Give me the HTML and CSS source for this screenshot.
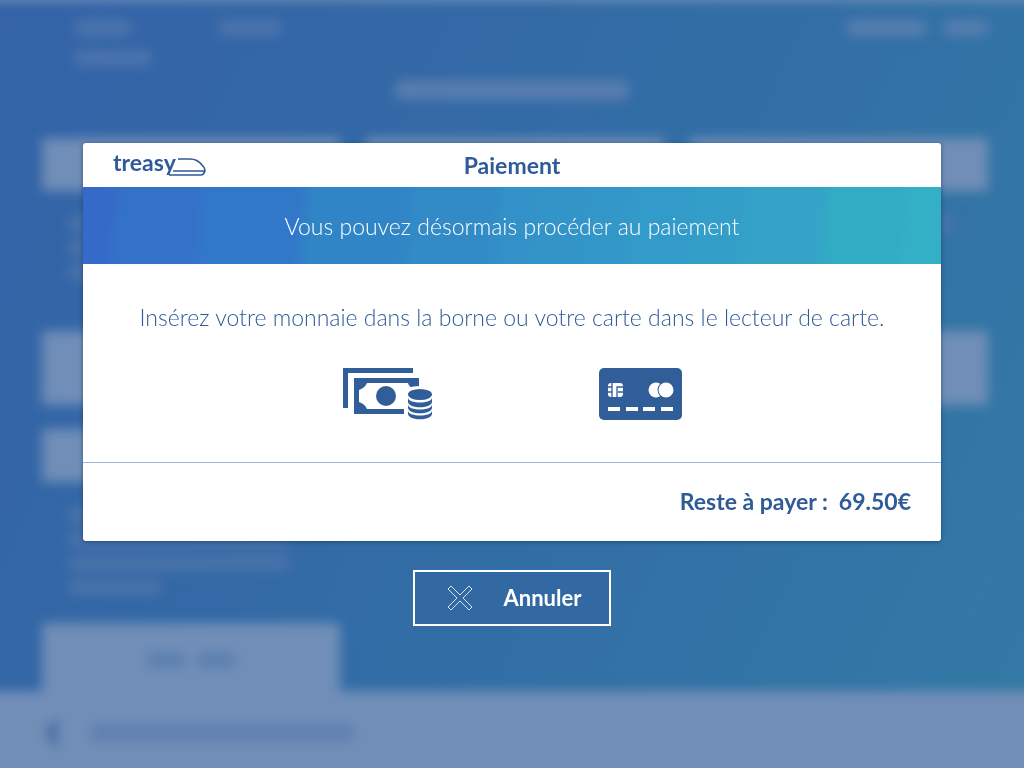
FILE: index.html
```html
<!DOCTYPE html>
<html lang="fr">
<head>
<meta charset="utf-8">
<meta name="viewport" content="width=device-width, initial-scale=1">
<title>Treasy - Paiement</title>
<link rel="stylesheet" href="styles.css">
</head>
<body>
<div class="kiosk" aria-hidden="true">
  <div class="scene">
    <div class="topbar">
      <div class="trip">
        <span class="trip-item"></span>
        <span class="trip-item trip-item-wide"></span>
      </div>
      <div class="travel"></div>
      <div class="clock"><span class="clock-date"></span><span class="clock-time"></span></div>
    </div>
    <div class="heading"></div>
    <div class="tickets">
      <div class="tile tile-name"></div>
      <div class="tile tile-name"></div>
      <div class="tile tile-name"></div>
      <div class="note"><i></i><i></i><i></i></div>
      <div class="note"><i></i><i></i></div>
      <div class="note"><i class="full"></i></div>
      <div class="tile tile-price"></div>
      <div class="tile tile-price"></div>
      <div class="tile tile-price"></div>
    </div>
    <div class="tickets tickets-last">
      <div class="column">
        <div class="tile tile-name"></div>
        <div class="note note-long"><i></i><i></i><i></i><i class="half"></i></div>
        <div class="tile tile-cost"><b></b><b></b></div>
      </div>
    </div>
    <div class="bottombar">
      <svg width="18" height="28" viewBox="0 0 18 28"><path d="M14 3L5 14L14 25" fill="none" stroke="#43699f" stroke-width="7"/></svg>
      <span class="back"></span>
    </div>
  </div>
</div>

<main class="overlay">
  <section class="dialog" role="dialog" aria-modal="true" aria-labelledby="dialog-title">
    <header class="dialog-header">
      <div class="logo">
        <span class="logo-text">treasy</span>
        <svg class="logo-train" width="40" height="20" viewBox="0 0 40 20" aria-hidden="true">
          <path d="M11 3H23C29 3 32 5 35 9C39 13 38 15 37 17Q36 19 34 19H2M6 15H37" fill="none" stroke="#2f5b98" stroke-width="1.700"/>
        </svg>
      </div>
      <h1 class="dialog-title" id="dialog-title">Paiement</h1>
    </header>
    <p class="banner">Vous pouvez désormais procéder au paiement</p>
    <div class="dialog-body">
      <p class="instructions">Insérez votre monnaie dans la borne ou votre carte dans le lecteur de carte.</p>
      <div class="methods">
        <svg width="92" height="54" viewBox="0 0 92 54" role="img" aria-label="Espèces">
          <path d="M1 0H71V5H6V40H1ZM12 10H77V46H12Z" fill="#315d98"/>
          <path d="M25 15H66Q67 19 72 21V41H25Q23 36 17 34V22Q23 20 25 15Z" fill="#fff"/>
          <path d="M62 41V46H12V41Z" fill="#315d98"/>
          <path d="M62 46V29C62 21 68 18 78 18V54H62Z" fill="#fff"/>
          <g fill="#315d98">
            <circle cx="44" cy="28" r="10"/>
            <ellipse cx="78" cy="26.500" rx="12" ry="5.500"/>
            <path d="M66 30C67 36 89 36 90 30V34C89 41 67 41 66 34Z"/>
            <path d="M66 37C67 43 89 43 90 37V40C89 47 67 47 66 40Z"/>
            <path d="M66 43C67 49 89 49 90 43V46C89 53 67 53 66 46Z"/>
          </g>
        </svg>
        <svg width="84" height="52" viewBox="0 0 84 52" role="img" aria-label="Carte bancaire">
          <rect x="1" width="83" height="52" rx="5" fill="#315d98"/>
          <rect x="10" y="15" width="15" height="14" rx="3" fill="#fff"/>
          <path d="M14 15V29M19 29V19H25M10 19H14M10 24H14M20 24H25" fill="none" stroke="#315d98" stroke-width="1.300"/>
          <circle cx="58" cy="22" r="7.500" fill="#fff"/>
          <circle cx="68" cy="22" r="8.500" fill="#315d98"/>
          <circle cx="68" cy="22" r="7.500" fill="#fff"/>
          <path d="M10 41H22M28 41H40M45 41H57M63 41H75" stroke="#fff" stroke-width="4"/>
        </svg>
      </div>
    </div>
    <footer class="dialog-footer">
      <span>Reste à payer :</span>
      <span>69.50€</span>
    </footer>
  </section>
  <button class="cancel" type="button">
    <svg width="26" height="26" viewBox="0 0 26 26" aria-hidden="true">
      <path d="M4 1L13 10L22 1L25 4L16 13L25 22L22 25L13 16L4 25L1 22L10 13L1 4Z" fill="none" stroke="#d6e2f0" stroke-width="1" stroke-linejoin="round"/>
    </svg>
    <span>Annuler</span>
  </button>
</main>
</body>
</html>
```

FILE: styles.css
```css
* {
  box-sizing: border-box;
}

body {
  margin: 0;
  font-family: Lato, "Open Sans", sans-serif;
  color: #2f5b98;
}

/* Ticket screen, out of focus behind the dialog */
.kiosk {
  position: fixed;
  inset: 0;
  overflow: hidden;
  background: linear-gradient(115deg, #3463a8 0%, #3368a6 30%, #326fa6 60%, #3377a6 88%, #347aa5 100%);
}

.scene {
  display: flex;
  flex-direction: column;
  height: calc(100% + 40px);
  margin: -20px;
  width: calc(100% + 40px);
  padding-top: 20px;
  border-top: 4px solid transparent;
  filter: blur(6px);
  box-shadow: inset 0 17px #6f8eb6;
}

.topbar {
  display: flex;
  align-items: flex-start;
  height: 62px;
  padding: 16px 56px 0 94px;
}

.trip {
  display: flex;
  flex-direction: column;
  gap: 14px;
  width: 144px;
}

.trip-item,
.travel,
.clock-date,
.clock-time {
  height: 16px;
  border-radius: 6px;
  background: #4c74ad;
}

.trip-item {
  width: 58px;
}

.trip-item-wide {
  width: 78px;
}

.travel {
  width: 64px;
}

.clock {
  display: flex;
  gap: 18px;
  margin-left: auto;
}

.clock-date {
  width: 80px;
  background: #587eb0;
}

.clock-time {
  width: 44px;
  background: #587eb0;
}

.heading {
  width: 234px;
  height: 20px;
  margin: 14px auto 38px;
  border-radius: 6px;
  background: #587db0;
}

.tickets {
  display: grid;
  grid-template-columns: repeat(3, 1fr);
  column-gap: 26px;
  padding: 0 56px 0 62px;
}

.tickets-last {
  margin-top: 24px;
}

.tile {
  border-radius: 3px;
  background: #708eb7;
}

.tile-name {
  height: 53px;
}

.tile-price {
  height: 74px;
}

.note {
  display: flex;
  flex-direction: column;
  gap: 8px;
  height: 140px;
  padding: 25px 32px 0 26px;
}

.note i {
  width: 94%;
  height: 16px;
  border-radius: 6px;
  background: #4972aa;
}

.note .full {
  width: 100%;
}

.note .half {
  width: 40%;
}

.note-long {
  height: 141px;
  padding-right: 36px;
}

.tile-cost {
  display: flex;
  justify-content: center;
  align-items: center;
  gap: 12px;
  height: 74px;
}

.tile-cost b {
  width: 38px;
  height: 16px;
  border-radius: 6px;
  background: #5d80b0;
}

.bottombar {
  display: flex;
  align-items: center;
  gap: 28px;
  flex: 1;
  margin-top: -6px;
  padding: 0 64px 14px;
  background: #718eb7;
}

.back {
  width: 264px;
  height: 18px;
  border-radius: 6px;
  background: #6080b0;
}

/* Payment dialog */
.overlay {
  position: relative;
  display: flex;
  flex-direction: column;
  justify-content: center;
  align-items: center;
  gap: 29px;
  min-height: 100vh;
  padding: 0 83px;
}

.dialog {
  width: 100%;
  border-radius: 3px;
  background: #fff;
  box-shadow: 0 1px 4px rgba(20, 50, 90, 0.6);
}

.dialog-header {
  display: grid;
  grid-template-columns: 1fr auto 1fr;
  align-items: center;
  height: 44px;
  padding: 0 30px;
}

.logo {
  display: flex;
  align-items: flex-end;
  padding-bottom: 5px;
}

.logo-text {
  font-size: 23px;
  line-height: 28px;
  font-weight: 700;
}

.logo-train {
  margin-left: -9px;
}

.dialog-title {
  margin: 0;
  font-size: 23px;
  line-height: 28px;
  font-weight: 700;
}

.banner {
  margin: 0;
  padding: 23px 24px 22px;
  font-size: 23px;
  line-height: 32px;
  font-weight: 300;
  text-align: center;
  color: #fff;
  background: linear-gradient(96deg,
    #356ac8 3%, #3471c9 5% 13%, #3278c8 15% 25%, #3085c6 27% 37%,
    #328ac6 39% 47%, #3390c8 49% 51%, #3394c8 53% 58%, #3398c9 60% 63%,
    #339bc9 65% 70%, #339fc8 72% 76%, #34a3c7 78% 85%, #32abc5 87% 94%, #33afc6 96%);
}

.dialog-body {
  padding: 37px 24px 40px;
  border-bottom: 1px solid #a4b7d4;
  text-align: center;
}

.instructions {
  margin: 0 0 35px;
  font-size: 23px;
  line-height: 32px;
  font-weight: 300;
}

.methods {
  display: flex;
  justify-content: center;
  gap: 164px;
}

.dialog-footer {
  display: flex;
  justify-content: flex-end;
  gap: 11px;
  padding: 22px 30px 24px;
  font-size: 23px;
  line-height: 32px;
  font-weight: 700;
}

.cancel {
  display: flex;
  align-items: center;
  gap: 31px;
  padding: 10px 28px 10px 32px;
  border: 2px solid #fff;
  background: #3269a2;
  color: #fff;
  font: 700 22px/32px Lato, "Open Sans", sans-serif;
  cursor: pointer;
}
```
